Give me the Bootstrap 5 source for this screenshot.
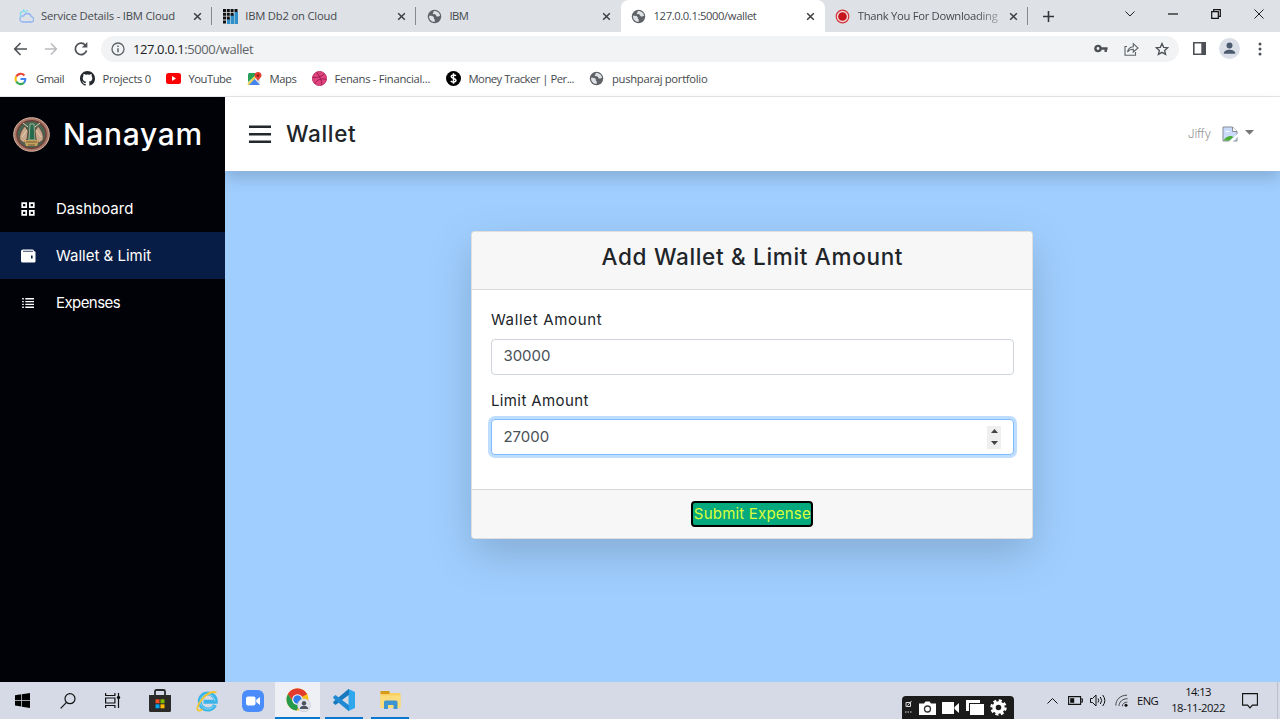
<!DOCTYPE html>
<html lang="en">
<head>
<meta charset="utf-8">
<meta name="viewport" content="width=device-width, initial-scale=1">
<title>Wallet</title>
<link rel="stylesheet" href="https://cdn.jsdelivr.net/npm/bootstrap@5.3.0/dist/css/bootstrap.min.css">
<style>
  body { font-family: Inter, sans-serif; font-size: 15px; color: #212529; overflow: hidden; }
  svg { display: block; flex: none; }
  .chrome { font-family: "Open Sans", sans-serif; font-size: 11.25px; color: #45494d; line-height: 16px; white-space: nowrap; }

  /* letter spacing steps */
  .ls-tab { letter-spacing: -.2px; }
  .ls-num { letter-spacing: -.4px; }
  .ls-bm { letter-spacing: -.3px; }
  .ls-bm2 { letter-spacing: -.5px; }
  .ls-clock { letter-spacing: -.6px; }
  .ls-wide { letter-spacing: .68px; }
  .ls-mid { letter-spacing: .4px; }
  .ls-tight { letter-spacing: -.57px; }

  /* tab strip */
  .tabstrip { height: 32px; background: #dee1e6; padding-left: 8px; }
  .tab-item { width: 204.2px; height: 32px; padding: 0 10px 0 10.5px; gap: 7.5px; position: relative; flex: none; }
  .tab-item:last-of-type { width: 203px; }
  .tab-item.sep::after { content: ""; position: absolute; right: 0; top: 7px; height: 18px; width: 1px; background: #85888d; }
  .tab-item.current { background: #fff; border-radius: 8px 8px 0 0; }
  .tab-label { flex: 1; overflow: hidden; }
  .tab-label.fade-end { -webkit-mask: linear-gradient(90deg, #000 82%, rgba(0,0,0,.3)); mask: linear-gradient(90deg, #000 82%, rgba(0,0,0,.3)); }
  .win-controls { padding-right: 16.5px; gap: 33px; margin-bottom: 5px; }

  /* toolbar and bookmarks */
  .toolbar { height: 33px; padding-left: 13px; }
  .omnibox { height: 26px; width: 1078px; border-radius: 13px; background: #f1f3f4; font-size: 13px; padding: 0 10px 0 10px; color: #5f6368; margin-left: 12px; }
  .omnibox b { font-weight: 400; color: #202124; }
  .bookmarks { height: 32px; padding: 0 0 4px 13px; border-bottom: 1px solid #e4e5e7; }
  .bookmarks > div { gap: 8px; flex: none; }
  .bm-s { width: 66.5px; } .bm-m { width: 86px; } .bm-l { width: 81px; } .bm-xs { width: 65px; } .bm-xl { width: 134px; } .bm-xxl { width: 143.5px; }

  /* application */
  .sidebar { width: 225px; background: #000208; color: #fff; flex: none; position: relative; z-index: 1; }
  .brand { height: 75px; padding-left: 13px; gap: 13px; font-size: 30px; font-weight: 500; margin-bottom: 13px; }
  .side-link { height: 47px; padding-left: 20px; gap: 20px; color: #fff; text-decoration: none; }
  .side-link span { padding-top: 1px; }
  .side-link.current { background: #081d45; }
  .content-area { background: #a0cfff; }
  .topbar { height: 74px; padding: 0 26px 0 24px; background: #fff; box-shadow: 0 7.5px 15px rgba(0,0,0,.16); }
  .page-title { font-size: 22.5px; font-weight: 500; line-height: 27px; padding-bottom: 2px; }
  .user-name { font-size: 12px; color: #999; font-weight: 300; letter-spacing: -.2px; }
  .wallet-card { width: 562px; margin: 60px 0 0 246.4px; border-radius: 4px; border-color: rgba(0,0,0,.125); box-shadow: 0 15px 45px rgba(0,0,0,.175); }
  .wallet-card .card-header { height: 58px; padding: 11px 0 0; background: #f7f7f7; border-color: rgba(0,0,0,.125); }
  .wallet-card .card-header h4 { font-size: 22.5px; line-height: 27px; font-weight: 500; margin: 0; }
  .wallet-card .card-body { height: 199px; padding: 19px 18.5px 0; flex: none; }
  .wallet-card .card-footer { height: 49px; padding: 0; background: #f7f7f7; border-color: rgba(0,0,0,.125); }
  .wallet-card label { display: block; line-height: 22px; margin-bottom: 7.5px; }
  .amount-box { height: 36px; padding: 0 11.5px; color: #495057; border: 1px solid #ced4da; border-radius: 4px; background: #fff; }
  .amount-box.active-box { border-color: #80bdff; box-shadow: 0 0 0 3px rgba(0,123,255,.25); }
  .spin { width: 14px; height: 23px; background: #efefef; }
  .submit-btn { height: 26px; width: 122px; padding: 0; background: #04aa7d; border: 2px solid #000; border-radius: 4px; color: #dcff3a; line-height: 22px; white-space: nowrap; letter-spacing: .2px; }

  /* taskbar */
  .taskbar { height: 37px; background: #d5dae6; color: #111; }
  .task { height: 37px; flex: none; }
  .task.running { border-bottom: 2px solid #0877cf; }
  .task.focused { background: #eef0f6; }
  .recorder { width: 112px; height: 23px; background: #1b1b1b; border-radius: 4px 4px 0 0; flex: none; }
  .w-a { width: 45px; } .w-b { width: 46.5px; } .w-run { width: 38px; }
  .clock { width: 66px; color: #111; }
</style>
</head>
<body>
<svg width="0" height="0" class="position-absolute">
  <symbol id="globe" viewBox="0 0 16 16"><circle cx="8" cy="8" r="7.2" fill="#5f6368"/><path d="M2.2 7.2C4 7.2 5.8 7 7 8.4S6.400 10.500 8.300 11v2.700C4.500 14 2 11 2.200 7.200zM7 2.300c.3 1.500-.6 1.700-1 2.500.6 1.400 2.500.2 3.300 1.400s.6 1.900 2.100 1.900 1.600-.9 2.500-.5C13.800 4.500 10.800 1.800 7 2.300z" fill="#dee1e6"/></symbol>
  <symbol id="close" viewBox="0 0 10 10"><path d="M1.300 1.300l7.400 7.400M8.700 1.300L1.300 8.700" stroke="#3c4043" stroke-width="1.700"/></symbol>
</svg>
<div class="d-flex flex-column vh-100">
  <header class="chrome bg-white">
    <div class="tabstrip d-flex align-items-center">
      <div class="tab-item sep d-flex align-items-center">
        <svg width="15" height="14" viewBox="0 0 15 14" fill="none" stroke-width="1.300"><path d="M3.500 13h8.300a2.700 2.700 0 0 0 .4-5.400A4 4 0 0 0 4.600 7 3 3 0 0 0 3.500 13z" stroke="#8fb3f5"/><path d="M2.200 8A3.500 3.500 0 0 1 7.600 3.500M1 3l1.300.9M4.600.3v1.500M8.500 1l-.8 1.200" stroke="#7fdcee"/></svg>
        <span class="tab-label ls-tab">Service Details - IBM Cloud</span><svg width="9" height="9"><use href="#close"/></svg>
      </div>
      <div class="tab-item sep d-flex align-items-center">
        <svg width="15" height="15" viewBox="0 0 15 15"><path d="M11.500 3H15v12H11.500zM7.600 5.500H11V15H7.600zM4 9h3v6H4z" fill="#2f8fc9"/><path d="M1.500 0v15M5.300 0v11M9.100 0v6.700M13 0v3" stroke="#111" stroke-width="3" stroke-dasharray="3 .8"/></svg>
        <span class="tab-label ls-tab">IBM Db2 on Cloud</span><svg width="9" height="9"><use href="#close"/></svg>
      </div>
      <div class="tab-item d-flex align-items-center">
        <svg width="15" height="15"><use href="#globe"/></svg>
        <span class="tab-label ls-bm2">IBM</span><svg width="9" height="9"><use href="#close"/></svg>
      </div>
      <div class="tab-item current d-flex align-items-center">
        <svg width="15" height="15"><use href="#globe"/></svg>
        <span class="tab-label ls-num">127.0.0.1:5000/wallet</span><svg width="9" height="9"><use href="#close"/></svg>
      </div>
      <div class="tab-item sep d-flex align-items-center" style="width:203px">
        <svg width="15" height="15" viewBox="0 0 15 15"><circle cx="7.500" cy="7.500" r="6.300" fill="#f4d8da" stroke="#d1343b" stroke-width="1.200"/><circle cx="7.500" cy="7.500" r="4.300" fill="#c4161c"/></svg>
        <span class="tab-label fade-end ls-bm">Thank You For Downloading</span><svg width="9" height="9"><use href="#close"/></svg>
      </div>
      <svg style="margin-left:15px" width="11" height="11" viewBox="0 0 11 11"><path d="M5.500 0v11M0 5.500h11" stroke="#33363a" stroke-width="1.600"/></svg>
      <div class="win-controls d-flex align-items-center ms-auto">
        <svg width="10" height="6" viewBox="0 0 10 6" fill="none"><path d="M.5.500L5 5 9.500.500" stroke="#222"/></svg>
        <svg width="10" height="2"><path d="M0 1h10" stroke="#111" stroke-width="1.200"/></svg>
        <svg width="10" height="10" viewBox="0 0 10 10" fill="none" stroke="#111" stroke-width="1.200"><path d="M.7 2.700h6.600v6.600H.7zM2.700 2.500V.7h6.600v6.600H7.500"/></svg>
        <svg width="10" height="10" viewBox="0 0 10 10"><path d="M.5.500l9 9M9.500.500l-9 9" stroke="#222"/></svg>
      </div>
    </div>
    <div class="toolbar d-flex align-items-center">
      <svg width="15" height="14" viewBox="0 0 15 14" fill="none" stroke="#4d5156" stroke-width="1.600"><path d="M14 7H2M7.500 1L1.700 7l5.800 6"/></svg>
      <svg class="ms-3" width="14" height="14" viewBox="0 0 15 14" fill="none" stroke="#b8babd" stroke-width="1.600"><path d="M1 7h12M7.500 1l5.800 6-5.800 6"/></svg>
      <svg class="ms-3" width="15" height="14" viewBox="0 0 15 14" fill="none" stroke="#4d5156" stroke-width="1.700"><path d="M12.600 8.500A5.700 5.700 0 1 1 11.300 3"/><path d="M13.400 0v5.600H7.800z" fill="#4d5156" stroke="none"/></svg>
      <div class="omnibox d-flex align-items-center">
        <svg width="14" height="14" viewBox="0 0 14 14" fill="none" stroke="#5f6368" stroke-width="1.300"><circle cx="7" cy="7" r="6"/><path d="M7 6.200v4M7 3.500V5" stroke-width="1.500"/></svg>
        <span class="ls-num ms-2 flex-grow-1"><b>127.0.0.1</b>:5000/wallet</span>
        <svg width="14" height="9" viewBox="0 0 14 9" fill="none" stroke="#4d5156"><circle cx="4" cy="4.500" r="2.600" stroke-width="2.400"/><path d="M7 4.500h6.600M11.700 4.500v3.500" stroke-width="2.400"/></svg>
        <svg class="ms-3" width="15" height="14" viewBox="0 0 15 14" fill="none" stroke="#5f6368" stroke-width="1.100"><path d="M3 4.500H1v8.700h10.500V10M3.500 10C4 6.500 6 5 9.300 4.700V1.700L14 6 9.300 10V7.300C6.800 7.300 5 8 3.500 10z"/></svg>
        <svg class="ms-3" width="14" height="14" viewBox="0 0 16 16" fill="none" stroke="#4d5156" stroke-width="1.500"><path d="M8 1.800l1.900 4.300 4.600.4-3.500 3.100 1.100 4.600L8 11.800l-4.100 2.400L5 9.600 1.500 6.500l4.600-.4z"/></svg>
      </div>
      <svg style="margin-left:14px" width="13" height="13" viewBox="0 0 13 13"><path d="M.8.800h11.400v11.400H.8z" fill="none" stroke="#4d5156" stroke-width="1.600"/><path d="M8.300.500H13V12.500H8.300z" fill="#4d5156"/></svg>
      <svg style="margin-left:13px" width="21" height="21" viewBox="0 0 21 21"><circle cx="10.500" cy="10.500" r="10.500" fill="#dbe0e8"/><circle cx="10.500" cy="7.500" r="3" fill="#4c5a70"/><path d="M4.700 15.700c0-5.300 11.600-5.300 11.600 0z" fill="#4c5a70"/></svg>
      <svg style="margin-left:18px" width="4" height="14" viewBox="0 0 4 14" fill="#4d5156"><circle cx="2" cy="2" r="1.500"/><circle cx="2" cy="7" r="1.500"/><circle cx="2" cy="12" r="1.500"/></svg>
    </div>
    <div class="bookmarks d-flex align-items-center">
      <div class="bm-s d-flex align-items-center"><svg width="15" height="14" viewBox="0 0 15 14" fill="none" stroke-width="2.100"><path d="M11.400 3.500A5 5 0 0 0 3.200 4.500" stroke="#ea4335"/><path d="M3.200 4.500a5 5 0 0 0 0 5" stroke="#fbbc05"/><path d="M3.200 9.500a5 5 0 0 0 7.800 1.200" stroke="#34a853"/><path d="M11 10.700A5 5 0 0 0 12.300 7H7.500" stroke="#4285f4"/></svg><span class="ls-bm2">Gmail</span></div>
      <div class="bm-m d-flex align-items-center"><svg width="15" height="15" viewBox="0 0 16 16" fill="#24292e"><path d="M8 0C3.580 0 0 3.580 0 8c0 3.540 2.290 6.530 5.470 7.590.4.070.55-.17.55-.38 0-.19-.01-.82-.01-1.490-2.010.37-2.530-.49-2.690-.94-.09-.23-.48-.94-.82-1.130-.28-.15-.68-.52-.01-.53.63-.01 1.080.58 1.230.82.72 1.210 1.870.87 2.330.66.07-.52.28-.87.51-1.070-1.780-.2-3.640-.89-3.640-3.950 0-.87.31-1.590.82-2.150-.08-.2-.36-1.020.08-2.120 0 0 .67-.21 2.200.82a7.420 7.420 0 0 1 4 0c1.530-1.040 2.200-.82 2.200-.82.44 1.100.16 1.920.08 2.120.51.56.82 1.270.82 2.150 0 3.070-1.870 3.750-3.650 3.950.29.25.54.73.54 1.480 0 1.070-.01 1.930-.01 2.200 0 .21.15.46.55.38A8.010 8.010 0 0 0 16 8c0-4.420-3.580-8-8-8z"/></svg><span class="ls-bm">Projects 0</span></div>
      <div class="bm-l d-flex align-items-center"><svg width="15" height="11" viewBox="0 0 15 11"><rect width="15" height="11" rx="2.500" fill="#f00"/><path d="M6 3v5l4-2.500z" fill="#fff"/></svg><span class="ls-bm2">YouTube</span></div>
      <div class="bm-xs d-flex align-items-center"><svg width="15" height="14" viewBox="0 0 15 14"><rect x="1" y="1" width="12" height="12" rx="1.500" fill="#dce6ea"/><path d="M1 10V2.500Q1 1 2.500 1H8v3z" fill="#28a058"/><path d="M1.500 13L7 6.500l6 6.500z" fill="#4384ee"/><path d="M1 12.500L9 4" stroke="#f8d34d" stroke-width="2"/><path d="M11 0a3.500 3.500 0 0 1 3.500 3.500C14.500 6 11.500 6.500 11 9.500 10.500 6.500 7.500 6 7.500 3.500A3.500 3.500 0 0 1 11 0z" fill="#e14033"/><circle cx="11" cy="3.500" r="1.200" fill="#8c1d18"/></svg><span class="ls-num">Maps</span></div>
      <div class="bm-xl d-flex align-items-center"><svg width="15" height="15" viewBox="0 0 16 16" fill="none"><circle cx="8" cy="8" r="7.500" fill="#e0447f" stroke="#b8285f"/><path d="M5 1.500C8 5 10 9 10.500 14.800M.8 7C6 7 10.500 6 13.200 3M3.200 13.500C5 9 10 7.500 15.200 9" stroke="#9c1c50"/></svg><span class="ls-bm">Fenans - Financial...</span></div>
      <div class="bm-xxl d-flex align-items-center"><svg width="15" height="15" viewBox="0 0 15 15"><circle cx="7.500" cy="7.500" r="7.500" fill="#000"/><path d="M10 4.800C8.500 3.300 5 3.800 5.200 5.800S10 7.300 10 9.300 6.500 11.700 4.800 10M7.500 2.200v10.600" fill="none" stroke="#fff" stroke-width="1.500"/></svg><span class="ls-bm2">Money Tracker | Per...</span></div>
      <div class="d-flex align-items-center"><svg width="15" height="15"><use href="#globe"/></svg><span class="ls-bm">pushparaj portfolio</span></div>
    </div>
  </header>

  <div class="d-flex flex-grow-1">
    <nav class="sidebar">
      <div class="brand d-flex align-items-center ls-wide">
        <svg width="37" height="35" viewBox="0 0 37 35"><ellipse cx="18.500" cy="17.500" rx="17.800" ry="16.800" fill="#a77767" stroke="#dbb2a1"/><ellipse cx="18.500" cy="17.500" rx="14.500" ry="13.700" fill="#466553" stroke="#703f37" stroke-width="1.500"/><path d="M17 7h4l1 16h-6z" fill="#266b50" stroke="#b7c29b" stroke-width=".8"/><path d="M12 9C8 14 6 18 7 23l4 3 3-4 1-8zM25 9c4 5 6 9 5 14l-4 3-3-4-1-8z" fill="#c9a98d" stroke="#633f33" stroke-width=".8"/><path d="M10 6l5 4M27 6l-5 4M9 20l5-7M28 20l-5-7" stroke="#e2cfaa"/><path d="M11 23h15l-2 6H13z" fill="#c5a35e"/><path d="M13 25h11M15 28h7" stroke="#76563b"/></svg>
        Nanayam
      </div>
      <a href="#" class="side-link d-flex align-items-center"><svg width="16" height="16" viewBox="0 0 16 16" fill="none" stroke="#fff" stroke-width="1.700"><path d="M2.200 2.200h4v4h-4zM9.800 2.200h4v4h-4zM2.200 9.800h4v4h-4zM9.800 9.800h4v4h-4z"/></svg><span>Dashboard</span></a>
      <a href="#" class="side-link current d-flex align-items-center"><svg width="16" height="16" viewBox="0 0 16 16"><path d="M1 3.200Q1 1.500 3 1.500h9.500q1.500 0 1.500 1.700h.5q1 0 1 1v9q0 1.300-1.300 1.300H2.500Q1 14.500 1 13z" fill="#fff"/><path d="M3 3.300h10" stroke="#081d45" stroke-width=".8"/><path d="M11 7.500h1.600v3H11z" fill="#081d45"/></svg><span>Wallet &amp; Limit</span></a>
      <a href="#" class="side-link d-flex align-items-center"><svg width="16" height="16" viewBox="0 0 16 16" stroke="#fff" stroke-width="1.400"><path d="M2.200 3.800h1.600M2.200 6.600h1.600M2.200 9.400h1.600M2.200 12.200h1.600M5.300 3.800H14M5.300 6.600H14M5.300 9.400H14M5.300 12.200H14"/></svg><span class="ls-tight">Expenses</span></a>
    </nav>
    <main class="content-area flex-grow-1">
      <div class="topbar d-flex align-items-center">
        <svg width="22" height="18" viewBox="0 0 22 18"><path d="M0 1.800h22M0 9.200h22M0 16.700h22" stroke="#24272b" stroke-width="2.500"/></svg>
        <span class="page-title ls-wide" style="margin-left:15px">Wallet</span>
        <span class="user-name ms-auto">Jiffy</span>
        <svg style="margin-left:11px" width="16" height="16" viewBox="0 0 16 16"><path d="M1 1h9.500L15 5.500V15H1z" fill="#c9dafa" stroke="#868b91"/><path d="M10.500 1v4.500H15" fill="#fff" stroke="#868b91"/><path d="M3 6q1-2 3-1 2 0 2 1z" fill="#fff"/><path d="M1.500 14.500q3-5 8-4.500l2 1-4 3.500z" fill="#4caf37"/><path d="M6.500 16L16 7.500v3L10.500 16z" fill="#fff"/></svg>
        <svg style="margin:-3px 0 0 7px" width="9" height="5" viewBox="0 0 9 5"><path d="M0 0h9L4.500 4.700z" fill="#777"/></svg>
      </div>
      <div class="card wallet-card">
        <div class="card-header text-center"><h4 class="ls-wide">Add Wallet &amp; Limit Amount</h4></div>
        <div class="card-body">
          <label class="ls-wide">Wallet Amount</label>
          <div class="amount-box d-flex align-items-center">30000</div>
          <label class="ls-mid" style="margin-top:15px">Limit Amount</label>
          <div class="amount-box active-box d-flex align-items-center justify-content-between">27000
            <div class="spin d-flex flex-column align-items-center justify-content-center gap-1"><svg width="7" height="4" viewBox="0 0 7 4"><path d="M0 4L3.500 0 7 4z" fill="#444"/></svg><svg class="mt-1" width="7" height="4" viewBox="0 0 7 4"><path d="M0 0l3.500 4L7 0z" fill="#444"/></svg></div>
          </div>
        </div>
        <div class="card-footer d-flex align-items-center justify-content-center"><button class="submit-btn">Submit Expense</button></div>
      </div>
    </main>
  </div>

  <footer class="taskbar chrome d-flex align-items-center">
    <div class="task w-a d-flex align-items-center justify-content-center"><svg width="15" height="15" viewBox="0 0 15 15"><path d="M0 2.200L6.300 1.300V7H0zM7 1.200L15 0v7H7zM0 7.700h6.300v5.800L0 12.600zM7 7.700h8V15l-8-1.200z"/></svg></div>
    <div class="task w-a d-flex align-items-center justify-content-center"><svg width="16" height="16" viewBox="0 0 16 16" fill="none" stroke="#111" stroke-width="1.200"><circle cx="10" cy="5.700" r="5"/><path d="M6.500 9.300L.7 15.300"/></svg></div>
    <div class="task w-a d-flex align-items-center justify-content-center"><svg width="16" height="15" viewBox="0 0 16 15" fill="none" stroke="#111" stroke-width="1.200"><path d="M.6 0v2.500h9.300V0M.6 5h9.300v5H.6zM.6 15v-2.500h9.300V15M13.500 0v15M11.800 4.500h3.400" /><path d="M12.300 3h2.400v3h-2.400z" fill="#111" stroke="none"/></svg></div>
    <div class="task w-b d-flex align-items-center justify-content-center" style="margin-left:2px"><svg width="22" height="23" viewBox="0 0 22 23"><path d="M6 7V2.500Q6 1 7.500 1h7Q16 1 16 2.500V7" fill="none" stroke="#292929" stroke-width="1.800"/><path d="M0 6h22v15.500q0 1.500-1.500 1.500h-19Q0 23 0 21.500z" fill="#2c2a29"/><path d="M6.500 10.300h4v4h-4z" fill="#f25022"/><path d="M11.500 10.300h4v4h-4z" fill="#7fba00"/><path d="M6.500 15.300h4v4h-4z" fill="#00a4ef"/><path d="M11.500 15.300h4v4h-4z" fill="#ffb900"/></svg></div>
    <div class="task w-b d-flex align-items-center justify-content-center"><svg width="22" height="22" viewBox="0 0 22 22" fill="none"><path d="M19 15a8 8 0 1 1 .8-3.200H7.500" stroke="#3cb4e8" stroke-width="4"/><path d="M18 15.500a7.300 7.300 0 1 1 1-4.500" stroke="#8edcf8" stroke-width="1"/><path d="M2 20.500C-1.500 17 11-1 20.500 2.500M2 20.500q2 .5 4.500-1.300" stroke="#f4c430" stroke-width="1.800"/></svg></div>
    <div class="task w-a d-flex align-items-center justify-content-center"><svg width="22" height="22" viewBox="0 0 22 22"><rect width="22" height="22" rx="6" fill="#4a8cfb"/><rect x="4" y="6.500" width="9.500" height="9" rx="2" fill="#fff"/><path d="M14.300 9.700L18 7v8l-3.700-2.700z" fill="#fff"/></svg></div>
    <div class="task running focused w-a d-flex align-items-center justify-content-center"><svg width="25" height="24" viewBox="0 0 25 24" style="margin-left:2px"><circle cx="11.500" cy="11.500" r="11" fill="#fbc116"/><path d="M11.500 11.500L2 6a11 11 0 0 1 19 0z" fill="#e33b2e"/><path d="M2 6a11 11 0 0 0 8.500 16.500l5-8.500-4-2.500-4.500 2z" fill="#269b4c"/><path d="M11.500 6.200H21A11 11 0 0 0 2 6l5 7z" fill="#e33b2e"/><circle cx="11.500" cy="11.500" r="5.300" fill="#fff"/><circle cx="11.500" cy="11.500" r="4.200" fill="#2f7be8"/><circle cx="18" cy="17.300" r="6.500" fill="#e1e5eb" stroke="#b9bec6" stroke-width=".5"/><circle cx="18" cy="15.200" r="2.200" fill="#4c5462"/><path d="M13.700 21c0-4.500 8.600-4.500 8.600 0z" fill="#4c5462"/></svg></div>
    <div class="task running w-run d-flex align-items-center justify-content-center" style="margin-left:5px"><svg width="22" height="22" viewBox="0 0 22 22"><path d="M15.500 0L22 3v16l-6.500 3z" fill="#2fa7ec"/><path d="M16 5.800L2.500 16 .3 14.200v-1.500L15.500 0H16z" fill="#1879bf"/><path d="M16 16.200L2.500 6 .3 7.800v1.500L15.500 22h.5z" fill="#2089d3"/></svg></div>
    <div class="task running w-run d-flex align-items-center justify-content-center" style="margin-left:8px"><svg width="21" height="18" viewBox="0 0 21 18"><path d="M.5 1Q.5 0 1.500 0H8l2 2h9.500q1 0 1 1v14H.5z" fill="#f9cf5f"/><path d="M.5 0h9v3h-9z" fill="#d59c1c"/><path d="M.5 4.500h20V17H.5z" fill="#fbdc7d"/><path d="M4 18v-7q0-1.500 1.500-1.500h10.500q1.500 0 1.500 1.500v7h-4v-4H8v4z" fill="#3d94d0"/></svg></div>
    <div class="recorder ms-auto d-flex align-items-center align-self-end" style="padding:0 7px 0 3px;gap:6.500px">
      <svg width="7" height="15" viewBox="0 0 7 15" fill="none" stroke="#ddd"><path d="M1 2.500h4.500v4H1zM2.500 5.500L6.500 1"/><path d="M0 12h7" stroke-dasharray="1.500 1"/></svg>
      <svg width="17" height="14" viewBox="0 0 17 14"><path d="M0 2.500h5L6.500.500h4l1.500 2h5V14H0z" fill="#fff"/><circle cx="8.500" cy="8" r="3" fill="none" stroke="#333" stroke-width="1.300"/></svg>
      <svg width="17" height="12" viewBox="0 0 17 12"><path d="M0 0h12v12H0zM12.500 5L17 1v10l-4.500-4z" fill="#fff"/></svg>
      <svg width="18" height="15" viewBox="0 0 18 15"><path d="M0 0h14v3H3v8H0z" fill="#fff"/><path d="M4 4h14v11H4z" fill="#fff"/></svg>
      <svg width="17" height="17" viewBox="0 0 17 17"><g stroke="#fff" fill="none"><circle cx="8.500" cy="8.500" r="4.500" stroke-width="3.400"/><circle cx="8.500" cy="8.500" r="7" stroke-width="2.400" stroke-dasharray="3.100 2.400"/></g></svg>
    </div>
    <svg style="margin-left:33px" width="11" height="6" viewBox="0 0 11 6" fill="none"><path d="M.5 5.500l5-5 5 5" stroke="#111"/></svg>
    <svg style="margin-left:10px" width="15" height="9" viewBox="0 0 15 9" fill="none"><path d="M.6.600h12v7.800H.6zM13 3h1.300v3H13" stroke="#111" stroke-width="1.100"/><path d="M2.200 2.200h4v4.600h-4z" fill="#111"/></svg>
    <svg style="margin-left:7px" width="16" height="13" viewBox="0 0 16 13" fill="none" stroke="#111"><path d="M.5 4.500h2L6 1v11L2.500 8.500h-2zM8 4.500q1.500 2 0 4M10.300 3q2.800 3.500 0 7M12.700 1q4.300 5.500 0 11"/></svg>
    <svg style="margin-left:9px" width="13" height="13" viewBox="0 0 13 13" fill="none"><path d="M.8 11.500C.8 5.500 5.500 1.200 12 1.200M4 12c0-4 3.500-7.300 8.500-7.300M7.300 12.300c0-2.300 2-4.200 5-4.200" stroke="#444"/><circle cx="11" cy="11.300" r="1.500" fill="#111"/></svg>
    <span style="margin-left:9px;letter-spacing:-.64px">ENG</span>
    <div class="clock text-center" style="margin-left:7px"><div class="ls-clock" style="margin-top:-2px">14:13</div><div class="ls-bm2">18-11-2022</div></div>
    <svg style="margin:0 19px 0 11px" width="16" height="16" viewBox="0 0 16 16" fill="none"><path d="M.6.600h14.800v11.500h-5L8 14.800l-2.400-2.700h-5z" stroke="#111" stroke-width="1.100"/></svg>
    <div class="h-100 border-start border-secondary border-opacity-25" style="width:3px"></div>
  </footer>
</div>
<script src="https://cdn.jsdelivr.net/npm/bootstrap@5.3.0/dist/js/bootstrap.bundle.min.js"></script>
</body>
</html>
